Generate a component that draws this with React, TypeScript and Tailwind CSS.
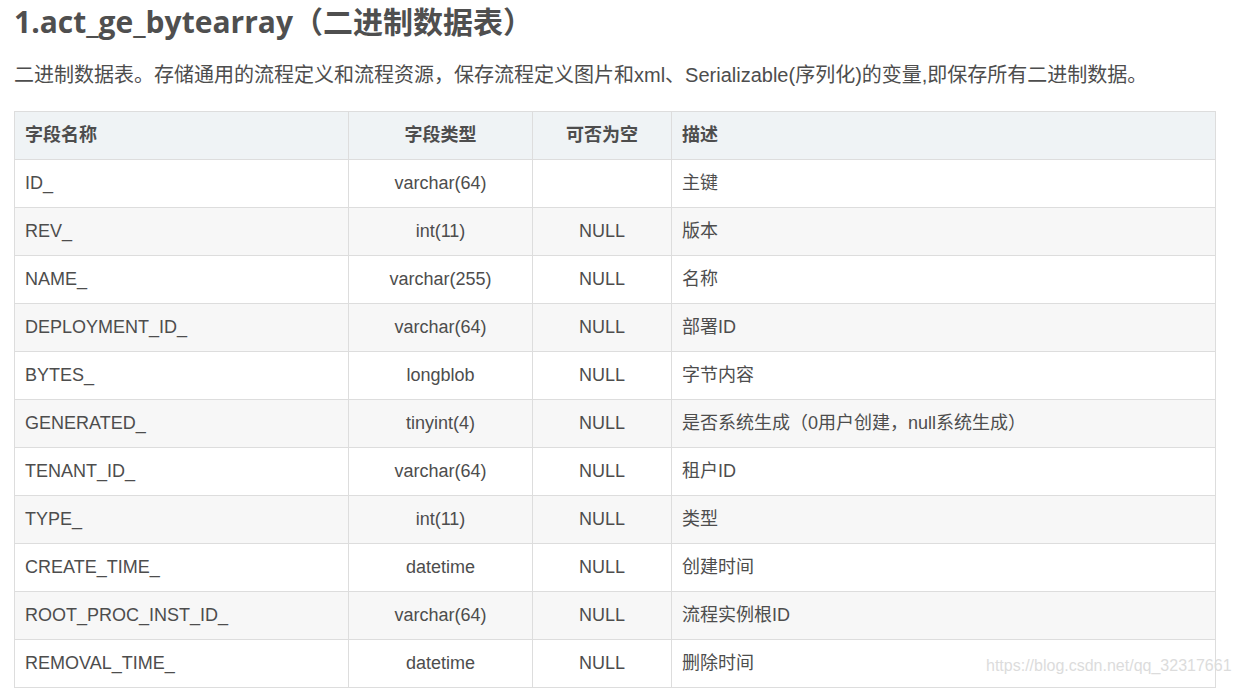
import React from 'react';

type Row = { name: string; type: string; nullable: string; desc: string };

const rows: Row[] = [
  { name: 'ID_', type: 'varchar(64)', nullable: '', desc: '主键' },
  { name: 'REV_', type: 'int(11)', nullable: 'NULL', desc: '版本' },
  { name: 'NAME_', type: 'varchar(255)', nullable: 'NULL', desc: '名称' },
  { name: 'DEPLOYMENT_ID_', type: 'varchar(64)', nullable: 'NULL', desc: '部署ID' },
  { name: 'BYTES_', type: 'longblob', nullable: 'NULL', desc: '字节内容' },
  { name: 'GENERATED_', type: 'tinyint(4)', nullable: 'NULL', desc: '是否系统生成（0用户创建，null系统生成）' },
  { name: 'TENANT_ID_', type: 'varchar(64)', nullable: 'NULL', desc: '租户ID' },
  { name: 'TYPE_', type: 'int(11)', nullable: 'NULL', desc: '类型' },
  { name: 'CREATE_TIME_', type: 'datetime', nullable: 'NULL', desc: '创建时间' },
  { name: 'ROOT_PROC_INST_ID_', type: 'varchar(64)', nullable: 'NULL', desc: '流程实例根ID' },
  { name: 'REMOVAL_TIME_', type: 'datetime', nullable: 'NULL', desc: '删除时间' },
];

const font = { fontFamily: '"Liberation Sans", "Noto Sans CJK SC", sans-serif' };

export default function App() {
  return (
    <div className="relative min-h-[691px] bg-white pl-[14px] text-[#4d4d4d]" style={font}>
      <h1
        className="pt-[2px] text-[30px] font-bold leading-[40px] text-[#4f4f4f]"
        style={{ fontFamily: '"Open Sans", "Noto Sans CJK SC", sans-serif' }}
      >
        1.act_ge_bytearray（二进制数据表）
      </h1>
      <p className="mt-[18px] text-[20px] leading-[30px]">
        二进制数据表。存储通用的流程定义和流程资源，保存流程定义图片和xml、Serializable(序列化)的变量,即保存所有二进制数据。
      </p>
      <table className="mt-[21px] w-[1202px] border-collapse text-[18px]">
        <thead>
          <tr className="h-[48px] bg-[#eff3f5] font-bold">
            <th className="w-[334px] border border-[#dddddd] px-[10px] text-left font-bold">字段名称</th>
            <th className="w-[184px] border border-[#dddddd] px-[10px] text-center font-bold">字段类型</th>
            <th className="w-[139px] border border-[#dddddd] px-[10px] text-center font-bold">可否为空</th>
            <th className="border border-[#dddddd] px-[10px] text-left font-bold">描述</th>
          </tr>
        </thead>
        <tbody>
          {rows.map((r, i) => (
            <tr key={r.name} className={i % 2 === 1 ? 'h-[48px] bg-[#f7f7f7]' : 'h-[48px] bg-white'}>
              <td className="border border-[#dddddd] px-[10px]">{r.name}</td>
              <td className="border border-[#dddddd] px-[10px] text-center">{r.type}</td>
              <td className="border border-[#dddddd] px-[10px] text-center">{r.nullable}</td>
              <td className="border border-[#dddddd] px-[10px]">{r.desc}</td>
            </tr>
          ))}
        </tbody>
      </table>
      {/* watermark */}
      <div className="absolute left-[986px] top-[654px] text-[16px] text-[#dcdcdc]">
        https://blog.csdn.net/qq_32317661
      </div>
    </div>
  );
}
